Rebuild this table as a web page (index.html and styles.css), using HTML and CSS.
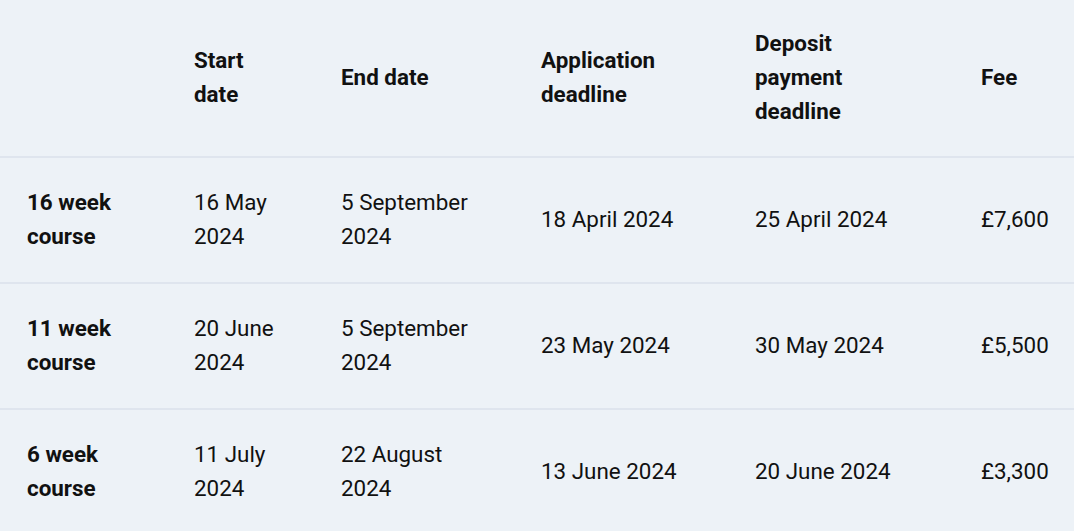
FILE: index.html
```html
<!DOCTYPE html>
<html lang="en">
<head>
<meta charset="utf-8">
<title>Course dates</title>
<link rel="stylesheet" href="styles.css">
</head>
<body>
<table class="dates">
  <colgroup>
    <col class="c1"><col class="c2"><col class="c3"><col class="c4"><col class="c5"><col class="c6">
  </colgroup>
  <thead>
    <tr>
      <th></th>
      <th>Start date</th>
      <th>End date</th>
      <th>Application deadline</th>
      <th>Deposit payment deadline</th>
      <th>Fee</th>
    </tr>
  </thead>
  <tbody>
    <tr>
      <th>16 week course</th>
      <td>16 May 2024</td>
      <td>5 September 2024</td>
      <td>18 April 2024</td>
      <td>25 April 2024</td>
      <td class="fee">£7,600</td>
    </tr>
    <tr>
      <th>11 week course</th>
      <td>20 June 2024</td>
      <td>5 September 2024</td>
      <td>23 May 2024</td>
      <td>30 May 2024</td>
      <td class="fee">£5,500</td>
    </tr>
    <tr>
      <th>6 week course</th>
      <td>11 July 2024</td>
      <td>22 August 2024</td>
      <td>13 June 2024</td>
      <td>20 June 2024</td>
      <td class="fee">£3,300</td>
    </tr>
  </tbody>
</table>
</body>
</html>
```

FILE: styles.css
```css
html, body {
  margin: 0;
  padding: 0;
  background: #edf2f7;
}

body {
  font-family: Roboto, "Liberation Sans", sans-serif;
  font-size: 22.4px;
  line-height: 34px;
  color: #111;
}

.dates {
  width: 1074px;
  table-layout: fixed;
  border-collapse: collapse;
  border-spacing: 0;
}

.c1 { width: 167px; }
.c2 { width: 147px; }
.c3 { width: 200px; }
.c4 { width: 214px; }
.c5 { width: 226px; }
.c6 { width: 120px; }

.dates th,
.dates td {
  text-align: left;
  vertical-align: middle;
  padding: 27px 36px 29px 27px;
}

.dates th {
  font-weight: 700;
}

.dates td {
  font-weight: 400;
}

.dates thead th {
  padding-top: 26px;
  padding-bottom: 28px;
}

.dates thead tr,
.dates tbody tr {
  border-bottom: 2px solid #dfe5ee;
}

.dates tbody tr:last-child {
  border-bottom: none;
}

.fee {
  white-space: nowrap;
}
```
